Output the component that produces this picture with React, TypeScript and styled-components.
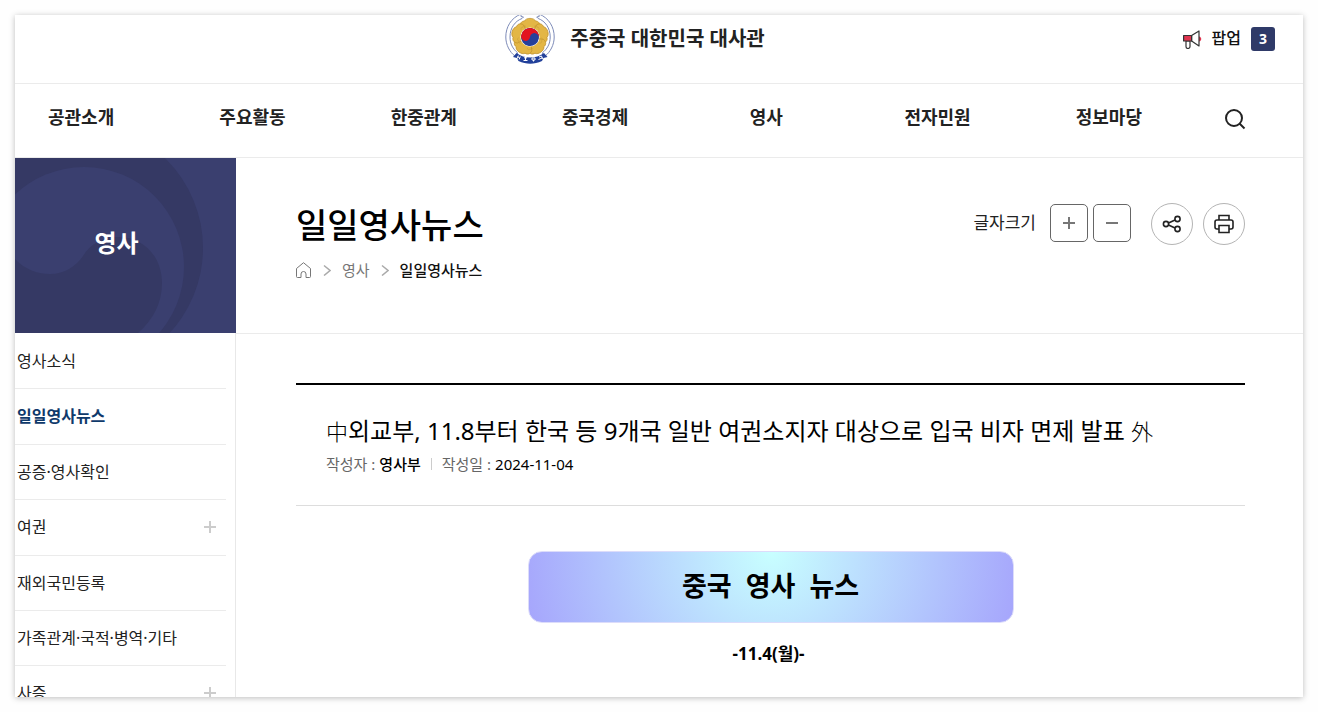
import React from "react";
import styled, { createGlobalStyle } from "styled-components";

const GlobalStyle = createGlobalStyle`
  *, *::before, *::after { box-sizing: border-box; }
  body {
    margin: 0;
    background: #fefefe;
    color: #222;
    font-family: "Noto Sans", "Noto Sans CJK KR", sans-serif;
    font-size: 16px;
    line-height: 24px;
  }
  h1, h2, h3, p, ul, ol, dl, dd { margin: 0; padding: 0; }
  ul, ol { list-style: none; }
  a { color: inherit; text-decoration: none; }
  button { font: inherit; color: inherit; padding: 0; background: none; border: 0; cursor: pointer; }
  svg { display: block; flex: none; }
`;

const Frame = styled.div`
  display: flex;
  flex-direction: column;
  height: calc(100vh - 30px);
  margin: 15px;
  overflow: hidden;
  background: #fff;
  box-shadow: 0 1px 6px rgba(0, 0, 0, 0.26);
`;

const TopBar = styled.header`
  flex: none;
  display: grid;
  grid-template-columns: 1fr auto 1fr;
  align-items: start;
  height: 69px;
  padding-right: 28px;
  border-bottom: 1px solid #ebebeb;
`;

const Brand = styled.a`
  grid-column: 2;
  display: flex;
  align-items: center;
  gap: 15px;
  height: 48px;
  padding-right: 20px;
  font-size: 20px;
  font-weight: 700;
`;

const PopupButton = styled.button`
  justify-self: end;
  display: flex;
  align-items: center;
  gap: 10px;
  height: 48px;
  color: #111;
  font-weight: 500;
`;

const PopupLabel = styled.span`
  padding-bottom: 2px;
`;

const Count = styled.span`
  width: 24px;
  height: 24px;
  border-radius: 3px;
  background: #2f3a68;
  color: #fff;
  font-size: 14px;
  font-weight: 700;
  text-align: center;
`;

const MainNav = styled.nav`
  flex: none;
  display: flex;
  align-items: center;
  gap: 82px;
  height: 74px;
  padding: 0 57px 7px 33px;
  border-bottom: 1px solid #ebebeb;
`;

const NavList = styled.ul`
  flex: 1;
  display: flex;
  justify-content: space-between;
`;

const NavItem = styled.li`
  min-width: 66px;
  color: #222;
  font-size: 18px;
  font-weight: 700;
  text-align: center;
  white-space: nowrap;
`;

const SearchButton = styled.button`
  display: flex;
  padding-top: 3px;
`;

const Columns = styled.div`
  flex: 1;
  display: grid;
  grid-template-columns: 221px minmax(0, 1fr);
  min-height: 0;
`;

const Sidebar = styled.aside`
  display: flex;
  flex-direction: column;
`;

const SideHead = styled.div`
  display: grid;
  flex: none;
  height: 175px;
  background: #3a3f6f;
  color: #fff;
  > * { grid-area: 1 / 1; }
`;

const SideTitle = styled.h2`
  align-self: center;
  padding: 0 18px 6px 0;
  font-size: 24px;
  font-weight: 700;
  line-height: 36px;
  text-align: center;
`;

const SideList = styled.ul`
  flex: 1;
  padding-right: 9px;
  border-right: 1px solid #e8e8e8;
`;

const SideItem = styled.li`
  display: flex;
  align-items: center;
  height: 55px;
  padding: 0 10px 0 2px;
  border-bottom: 1px solid #ebebeb;
  &:first-child { height: 56px; }
  &:nth-child(2), &:nth-child(4) { height: 56px; padding-bottom: 1px; }
`;

const SideLink = styled.a<{ $current?: boolean }>`
  flex: 1;
  color: ${(p) => (p.$current ? "#0f3a6b" : "#222")};
  font-weight: ${(p) => (p.$current ? 700 : 400)};
`;

const Content = styled.main`
  min-width: 0;
`;

const PageHead = styled.div`
  display: flex;
  justify-content: space-between;
  align-items: flex-start;
  height: 176px;
  padding: 42px 58px 0 60px;
  border-bottom: 1px solid #ebebeb;
`;

const PageTitle = styled.h1`
  color: #000;
  font-size: 34px;
  font-weight: 500;
  line-height: 50px;
`;

const Crumbs = styled.ol`
  display: flex;
  align-items: center;
  gap: 11px;
  padding-top: 8px;
  font-size: 15px;
`;

const Crumb = styled.li<{ $current?: boolean }>`
  display: flex;
  align-items: center;
  gap: 11px;
  color: ${(p) => (p.$current ? "#111" : "#777")};
  font-weight: ${(p) => (p.$current ? 500 : 400)};
`;

const Tools = styled.div`
  display: flex;
  align-items: center;
  gap: 5px;
  padding-top: 3px;
`;

const SizeGroup = styled.div`
  display: flex;
  align-items: center;
  gap: 5px;
  padding-bottom: 2px;
`;

const ToolLabel = styled.span`
  padding-right: 9px;
  font-size: 17px;
`;

const SizeButton = styled.button`
  display: grid;
  place-items: center;
  width: 38px;
  height: 38px;
  border: 1px solid #666;
  border-radius: 5px;
`;

const RoundGroup = styled.div`
  display: flex;
  gap: 10px;
  padding-left: 15px;
`;

const RoundButton = styled.button`
  display: grid;
  place-items: center;
  width: 42px;
  height: 42px;
  border: 1px solid #b4b4b4;
  border-radius: 50%;
`;

const Article = styled.article`
  padding: 49px 58px 0 60px;
`;

const ArticleHead = styled.div`
  height: 123px;
  padding: 28px 30px 0;
  border-top: 2px solid #000;
  border-bottom: 1px solid #ddd;
`;

const ArticleTitle = styled.h3`
  color: #000;
  font-size: 24px;
  font-weight: 400;
  line-height: 36px;
  white-space: nowrap;
`;

const Hanja = styled.span`
  font-size: 22px;
  font-weight: 300;
`;

const Meta = styled.dl`
  display: flex;
  align-items: center;
  padding-top: 3px;
  font-size: 15px;
`;

const MetaPair = styled.div`
  display: flex;
  gap: 4px;
  color: #666;
  & + & {
    margin-left: 10px;
    padding-left: 11px;
    background: linear-gradient(#ccc, #ccc) left center / 1px 12px no-repeat;
  }
`;

const MetaValue = styled.dd<{ $strong?: boolean }>`
  color: #000;
  font-weight: ${(p) => (p.$strong ? 500 : 400)};
`;

const Banner = styled.p`
  width: 486px;
  margin: 45px auto 0;
  padding-bottom: 2px;
  border: 1px solid #dcdcfa;
  border-radius: 14px;
  background: radial-gradient(ellipse 250px 250px at 50% 0, #c8ffff, #a6a6fc);
  color: #000;
  font-size: 27px;
  font-weight: 700;
  line-height: 68px;
  text-align: center;
  white-space: pre;
`;

const DateLine = styled.p`
  padding: 17px 4px 0 0;
  color: #000;
  font-size: 17px;
  font-weight: 700;
  line-height: 28px;
  text-align: center;
`;

const Emblem = () => (
  <svg width="50" height="50" viewBox="0 0 50 50" aria-hidden="true">
    <g fill="#fff" stroke="#7d8bb8" strokeWidth="1">
      <path d="M16 0C6 4 .8 13 .8 23c0 8 4 15 9 19l3-3C8 35 5 30 5 23 5 14 10 7 17 4.500l1.500-1.500-2.500-.5z" />
      <path d="M34 0c10 4 15.200 13 15.200 23 0 8-4 15-9 19l-3-3c5-4 8-9 8-16 0-9-5-16-12-18.500l-1.500-1.500 2.500-.5z" />
    </g>
    <g fill="#e3b645" stroke="#c39530" strokeWidth=".8" strokeLinejoin="round">
      {[0, 72, 144, 216, 288].map((a) => (
        <path key={a} transform={`rotate(${a} 25 23)`} d="M25 23 15.500 13c-1-3.500 1-6 4-6 1.500-3.500 9.500-3.500 11 0 3 0 5 2.500 4 6z" />
      ))}
    </g>
    <g fill="none" stroke="#cfa23a" strokeWidth=".7">
      {[36, 108, 180, 252, 324].map((a) => (
        <path key={a} transform={`rotate(${a} 25 23)`} d="M22 12c1-2 2-2 3-1 1-1 2-1 3 1" />
      ))}
    </g>
    <circle cx="25" cy="23" r="9.600" fill="#fff" />
    <g transform="rotate(8 25 23)">
      <circle cx="25" cy="23" r="9" fill="#26409a" />
      <path fill="#e3131f" d="M16 23a9 9 0 0 1 18 0 4.500 4.500 0 0 0-9 0 4.500 4.500 0 0 1-9 0z" />
    </g>
    <path d="m11.500 39-3.500 4 4 1 1.500 3c8 3.600 15.500 3.600 23.500 0l1.500-3 4-1-3.500-4c-8 6-19.500 6-27.500 0z" fill="#22409a" />
    <g fill="none" stroke="#fff" strokeWidth="1">
      <path d="m13.300 41.500-1 3M15.300 42.500l-1.200 3M12.500 42.800l2 .8" />
      <path d="M19 43.800h3M20.500 43v4M18.500 46.500h4" />
      <path d="M27 44h3v2h-3zM28.500 46v1.500" />
      <path d="m34 43 2.500-1 1 3M33.500 45.500l4-1.700" />
    </g>
  </svg>
);

const Megaphone = () => (
  <svg width="19" height="19" viewBox="0 0 19 19" fill="none" stroke="#333" strokeWidth="1.200" strokeLinejoin="round" aria-hidden="true">
    <path d="M16 6.500c3 .5 3 4.500 0 5z" fill="#e0344f" stroke="none" />
    <path d="M8.600 5.500 16 1v15l-7.400-5z" fill="#fff" />
    <path d="M3 11v5.500a2 2 0 0 0 4 0V11z" fill="#fff" />
    <path d="M.6 5.500h8V11h-8z" fill="#e0344f" />
  </svg>
);

const SearchIcon = () => (
  <svg width="22" height="22" viewBox="0 0 22 22" fill="none" stroke="#222" strokeWidth="2" aria-hidden="true">
    <circle cx="10" cy="10" r="8" />
    <path d="m15.500 15.500 5 5" />
  </svg>
);

const Swirl = () => (
  <svg width="221" height="175" viewBox="0 0 221 175" aria-hidden="true">
    <circle cx="63" cy="90" r="125" fill="#353964" />
    <circle cx="69" cy="109" r="100" fill="#3a3f6f" />
    <path fill="#353964" d="M0 101c10 11 24 15 35 15 15 0 26-8 33-18 7-12 20-19 35-19 27 0 44 21 44 46 0 20-9 37-24 50H0z" />
  </svg>
);

const Plus = ({ color }: { color: string }) => (
  <svg width="12" height="12" viewBox="0 0 12 12" stroke={color} strokeWidth="2" aria-hidden="true">
    <path d="M6 0v12M0 6h12" />
  </svg>
);

const Minus = () => (
  <svg width="12" height="12" viewBox="0 0 12 12" stroke="#777" strokeWidth="2" aria-hidden="true">
    <path d="M0 6h12" />
  </svg>
);

const ShareIcon = () => (
  <svg width="20" height="20" viewBox="0 0 20 20" fill="none" stroke="#222" strokeWidth="1.600" aria-hidden="true">
    <circle cx="4" cy="10" r="2.600" />
    <circle cx="15.500" cy="5" r="2.600" />
    <circle cx="15.500" cy="15" r="2.600" />
    <path d="m6.500 9 6.500-3M6.500 11l6.500 3" />
  </svg>
);

const PrintIcon = () => (
  <svg width="20" height="20" viewBox="0 0 20 20" fill="none" stroke="#222" strokeWidth="1.600" aria-hidden="true">
    <path d="M5 6V1.500h10V6M5 15H3a2 2 0 0 1-2-2V8a2 2 0 0 1 2-2h14a2 2 0 0 1 2 2v5a2 2 0 0 1-2 2h-2" />
    <path d="M5 11.500h10v7H5z" />
  </svg>
);

const HomeIcon = () => (
  <svg width="16" height="16" viewBox="0 0 16 16" fill="none" stroke="#777" strokeWidth="1" aria-hidden="true">
    <path d="M.5 6.500 7.500.7l7 5.800v8q0 1-1 1H10V12a2.500 2.500 0 0 0-5 0v3.500H1.500q-1 0-1-1z" />
  </svg>
);

const Chevron = () => (
  <svg width="8" height="12" viewBox="0 0 8 12" fill="none" stroke="#aaa" strokeWidth="1.500" aria-hidden="true">
    <path d="m1 1.500 6 5-6 5" />
  </svg>
);

const menus = ["공관소개", "주요활동", "한중관계", "중국경제", "영사", "전자민원", "정보마당"];

const sideMenu = [
  { label: "영사소식" },
  { label: "일일영사뉴스", current: true },
  { label: "공증·영사확인" },
  { label: "여권", expandable: true },
  { label: "재외국민등록" },
  { label: "가족관계·국적·병역·기타" },
  { label: "사증", expandable: true },
];

export default function App() {
  return (
    <>
      <GlobalStyle />
      <Frame>
        <TopBar>
          <Brand href="#">
            <Emblem />
            주중국 대한민국 대사관
          </Brand>
          <PopupButton type="button">
            <Megaphone />
            <PopupLabel>팝업</PopupLabel>
            <Count>3</Count>
          </PopupButton>
        </TopBar>
        <MainNav>
          <NavList>
            {menus.map((m) => (
              <NavItem key={m}>
                <a href="#">{m}</a>
              </NavItem>
            ))}
          </NavList>
          <SearchButton type="button" aria-label="검색">
            <SearchIcon />
          </SearchButton>
        </MainNav>
        <Columns>
          <Sidebar>
            <SideHead>
              <Swirl />
              <SideTitle>영사</SideTitle>
            </SideHead>
            <SideList>
              {sideMenu.map((item) => (
                <SideItem key={item.label}>
                  <SideLink href="#" $current={item.current}>
                    {item.label}
                  </SideLink>
                  {item.expandable && (
                    <button type="button" aria-label={`${item.label} 펼치기`}>
                      <Plus color="#ccc" />
                    </button>
                  )}
                </SideItem>
              ))}
            </SideList>
          </Sidebar>
          <Content>
            <PageHead>
              <div>
                <PageTitle>일일영사뉴스</PageTitle>
                <Crumbs>
                  <Crumb>
                    <a href="#" aria-label="홈">
                      <HomeIcon />
                    </a>
                    <Chevron />
                  </Crumb>
                  <Crumb>
                    <a href="#">영사</a>
                    <Chevron />
                  </Crumb>
                  <Crumb $current>일일영사뉴스</Crumb>
                </Crumbs>
              </div>
              <Tools>
                <SizeGroup>
                  <ToolLabel>글자크기</ToolLabel>
                  <SizeButton type="button" aria-label="글자 크게">
                    <Plus color="#777" />
                  </SizeButton>
                  <SizeButton type="button" aria-label="글자 작게">
                    <Minus />
                  </SizeButton>
                </SizeGroup>
                <RoundGroup>
                  <RoundButton type="button" aria-label="공유">
                    <ShareIcon />
                  </RoundButton>
                  <RoundButton type="button" aria-label="인쇄">
                    <PrintIcon />
                  </RoundButton>
                </RoundGroup>
              </Tools>
            </PageHead>
            <Article>
              <ArticleHead>
                <ArticleTitle>
                  <Hanja>中</Hanja>외교부, 11.8부터 한국 등 9개국 일반 여권소지자 대상으로 입국 비자 면제 발표 <Hanja>外</Hanja>
                </ArticleTitle>
                <Meta>
                  <MetaPair>
                    <dt>작성자 :</dt>
                    <MetaValue $strong>영사부</MetaValue>
                  </MetaPair>
                  <MetaPair>
                    <dt>작성일 :</dt>
                    <MetaValue>2024-11-04</MetaValue>
                  </MetaPair>
                </Meta>
              </ArticleHead>
              <Banner>{"중국  영사  뉴스"}</Banner>
              <DateLine>-11.4(월)-</DateLine>
            </Article>
          </Content>
        </Columns>
      </Frame>
    </>
  );
}
